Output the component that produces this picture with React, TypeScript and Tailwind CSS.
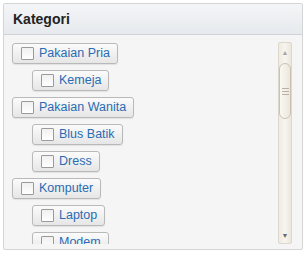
import React from "react";

type Item = { label: string; level: number };
const items: Item[] = [
  { label: "Pakaian Pria", level: 0 },
  { label: "Kemeja", level: 1 },
  { label: "Pakaian Wanita", level: 0 },
  { label: "Blus Batik", level: 1 },
  { label: "Dress", level: 1 },
  { label: "Komputer", level: 0 },
  { label: "Laptop", level: 1 },
  { label: "Modem", level: 1 },
];

function Btn({ label, level }: Item) {
  return (
    <div className={level ? "flex shrink-0 pl-[20px]" : "flex shrink-0"}>
      <div className="flex h-[21px] items-center gap-[5px] rounded-[3px] border border-[#b9b9b9] bg-gradient-to-b from-[#fbfbfb] to-[#e6e6e6] pl-[8px] pr-[7px] shadow-[0_1px_1px_rgba(0,0,0,0.08)]">
        <span className="h-[13px] w-[13px] shrink-0 rounded-[1px] border border-[#9a9a9a] bg-gradient-to-b from-[#f0f0f0] to-white" />
        <span className="text-[12.5px] leading-none text-[#2a6cb3]">{label}</span>
      </div>
    </div>
  );
}

export default function App() {
  return (
    <div className="h-[256px] w-[306px] bg-white p-[3px] font-['Liberation_Sans',Arial,sans-serif]">
      <div className="flex h-[247px] w-[300px] flex-col overflow-hidden rounded-[2px] border border-[#d4d4d4] bg-[#f5f5f5]">
        <div className="flex h-[31px] shrink-0 items-center border-b border-[#cfd2d6] bg-gradient-to-b from-[#f4f5f7] to-[#e6e9ed] pl-[9px]">
          <span className="text-[14px] font-bold text-[#222]">Kategori</span>
        </div>
        <div className="flex min-h-0 flex-1 pb-[5px] pt-[7px]">
          <div className="flex min-h-0 flex-1 flex-col gap-[6px] overflow-hidden pl-[8px] pt-[1px]">
            {items.map((it) => (
              <Btn key={it.label} {...it} />
            ))}
          </div>
          <div className="mr-[10px] flex w-[14px] flex-col rounded-[2px] border border-[#ddd7cc] bg-gradient-to-r from-[#efebe3] via-[#f7f5f0] to-[#ebe6dc]">
            <div className="flex h-[20px] items-center justify-center text-[7px] text-[#a9a69f]">▲</div>
            <div className="flex h-[56px] flex-col items-center justify-center gap-[2px] rounded-[6px] border border-[#c9c2b2] bg-gradient-to-r from-[#faf8f3] to-[#ece7dc]">
              <span className="h-px w-[7px] bg-[#b8b2a4]" />
              <span className="h-px w-[7px] bg-[#b8b2a4]" />
              <span className="h-px w-[7px] bg-[#b8b2a4]" />
            </div>
            <div className="flex-1" />
            <div className="flex h-[14px] items-center justify-center text-[7px] text-[#6d6a64]">▼</div>
          </div>
        </div>
      </div>
    </div>
  );
}
